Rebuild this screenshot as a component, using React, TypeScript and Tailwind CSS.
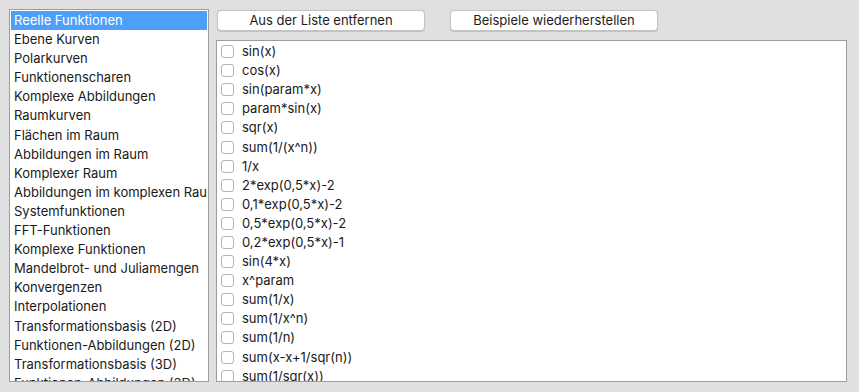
import React from 'react';

const categories = [
  'Reelle Funktionen',
  'Ebene Kurven',
  'Polarkurven',
  'Funktionenscharen',
  'Komplexe Abbildungen',
  'Raumkurven',
  'Flächen im Raum',
  'Abbildungen im Raum',
  'Komplexer Raum',
  'Abbildungen im komplexen Raum',
  'Systemfunktionen',
  'FFT-Funktionen',
  'Komplexe Funktionen',
  'Mandelbrot- und Juliamengen',
  'Konvergenzen',
  'Interpolationen',
  'Transformationsbasis (2D)',
  'Funktionen-Abbildungen (2D)',
  'Transformationsbasis (3D)',
  'Funktionen-Abbildungen (3D)',
];

const examples = [
  'sin(x)',
  'cos(x)',
  'sin(param*x)',
  'param*sin(x)',
  'sqr(x)',
  'sum(1/(x^n))',
  '1/x',
  '2*exp(0,5*x)-2',
  '0,1*exp(0,5*x)-2',
  '0,5*exp(0,5*x)-2',
  '0,2*exp(0,5*x)-1',
  'sin(4*x)',
  'x^param',
  'sum(1/x)',
  'sum(1/x^n)',
  'sum(1/n)',
  'sum(x-x+1/sqr(n))',
  'sum(1/sqr(x))',
  'sum(1/x^2)',
];

function Button({ label }: { label: string }) {
  return (
    <button className="h-[21px] w-[208px] rounded-[4px] border border-[#c4c4c4] bg-white text-[13px] leading-[19px] text-[#1d1d1d] shadow-[0_0.5px_1px_rgba(0,0,0,0.15)]">
      {label}
    </button>
  );
}

export default function App() {
  return (
    <div
      className="flex h-[392px] w-[859px] gap-[7px] bg-[#e0e0e0] pl-[9px] pt-[9px]"
      style={{ fontFamily: 'Inter, "Liberation Sans", Arial, sans-serif' }}
    >
      {/* Category list */}
      <div className="h-[373px] w-[200px] overflow-hidden border border-[#9d9d9d] bg-white p-[1px]">
        {categories.map((c, i) => (
          <div
            key={c}
            className={`h-[19.1px] overflow-hidden whitespace-nowrap pl-[3px] text-[13px] leading-[19.5px] ${
              i === 0 ? 'bg-[#4d9ffa] text-white' : 'text-[#1a1a1a]'
            }`}
          >
            {c}
          </div>
        ))}
      </div>

      {/* Right side */}
      <div className="flex w-[631px] flex-col">
        <div className="ml-[1px] mt-[1px] flex gap-[25px]">
          <Button label="Aus der Liste entfernen" />
          <Button label="Beispiele wiederherstellen" />
        </div>
        <div className="mt-[9px] h-[342px] overflow-hidden border border-[#9d9d9d] bg-white pt-[1px]">
          {examples.map((e) => (
            <div key={e} className="flex h-[19.1px] items-center gap-[8px] pl-[4px]">
              <span className="h-[13px] w-[13px] shrink-0 rounded-[3px] border border-[#b5b5b5] bg-white" />
              <span className="whitespace-nowrap text-[13px] leading-[19px] text-[#1a1a1a]">{e}</span>
            </div>
          ))}
        </div>
      </div>
    </div>
  );
}
